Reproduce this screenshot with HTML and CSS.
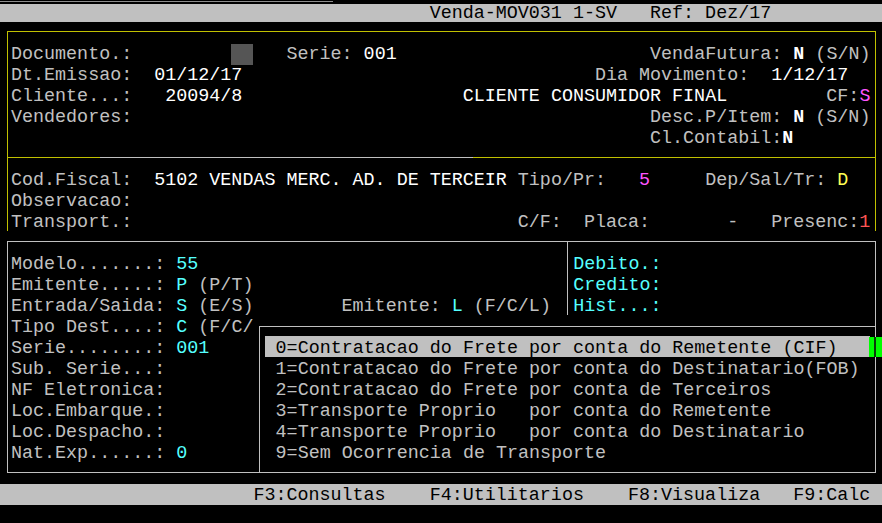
FILE: index.html
```html
<!DOCTYPE html>
<html lang="pt">
<head>
    <meta charset="UTF-8">
    <meta name="viewport" content="width=device-width, initial-scale=1.0">
    <title>Venda-MOV031</title>
    <link rel="stylesheet" href="styles.css">
</head>
<body>
    <div class="screen">
        <div class="titlebar">                                       Venda-MOV031 1-SV   Ref: Dez/17</div>

        <!-- cabecalho da venda -->
        <div class="frame frame-top">
            <div class="ln">Documento.:         <span class="cursor">  </span>   Serie: <span class="w">001</span>                       VendaFutura: <b class="w">N</b> (S/N)</div>
            <div class="ln">Dt.Emissao:  <span class="w">01/12/17</span>                                Dia Movimento:  <span class="w">1/12/17</span></div>
            <div class="ln">Cliente...:   <span class="w">20094/8</span>                    <span class="w">CLIENTE CONSUMIDOR FINAL</span>         CF:<span class="m">S</span></div>
            <div class="ln">Vendedores:                                               Desc.P/Item: <b class="w">N</b> (S/N)</div>
            <div class="ln">                                                          Cl.Contabil:<b class="w">N</b></div>
            <div class="rule"></div>
            <div class="ln">Cod.Fiscal:  <span class="w">5102 VENDAS MERC. AD. DE TERCEIR</span> Tipo/Pr:   <span class="m">5</span>     Dep/Sal/Tr: <span class="y">D</span></div>
            <div class="ln">Observacao:</div>
            <div class="ln">Transport.:                                   C/F:  Placa:       -   Presenc:<span class="r">1</span></div>
        </div>

        <!-- dados fiscais -->
        <div class="frame frame-low">
            <div class="split">
                <div class="fields">
                    <div class="ln">Modelo.......: <span class="c">55</span></div>
                    <div class="ln">Emitente.....: <span class="c">P</span> (P/T)</div>
                    <div class="ln">Entrada/Saida: <span class="c">S</span> (E/S)        Emitente: <span class="c">L</span> (F/C/L)</div>
                    <div class="ln">Tipo Dest....: <span class="c">C</span> (F/C/</div>
                    <div class="ln">Serie........: <span class="c">001</span></div>
                    <div class="ln">Sub. Serie...:</div>
                    <div class="ln">NF Eletronica:</div>
                    <div class="ln">Loc.Embarque.:</div>
                    <div class="ln">Loc.Despacho.:</div>
                    <div class="ln">Nat.Exp......: <span class="c">0</span></div>
                </div>
                <div class="side">
                    <div class="ln c">Debito.:</div>
                    <div class="ln c">Credito:</div>
                    <div class="ln c">Hist...:</div>
                </div>
            </div>
        </div>

        <div class="ln fkeys">                       F3:Consultas    F4:Utilitarios    F8:Visualiza   F9:Calc</div>

        <!-- lista de modalidade de frete -->
        <div class="popup">
            <div class="ln opt sel">0=Contratacao do Frete por conta do Remetente (CIF)</div>
            <div class="ln opt">1=Contratacao do Frete por conta do Destinatario(FOB)</div>
            <div class="ln opt">2=Contratacao do Frete por conta de Terceiros</div>
            <div class="ln opt">3=Transporte Proprio   por conta do Remetente</div>
            <div class="ln opt">4=Transporte Proprio   por conta do Destinatario</div>
            <div class="ln opt">9=Sem Ocorrencia de Transporte</div>
        </div>
        <div class="caret"></div>
    </div>
</body>
</html>
```

FILE: styles.css
```css
body {
    margin: 0;
    background: #000;
}
.screen {
    position: relative;
    width: 882px;
    height: 523px;
    overflow: hidden;
    background: #000;
    color: #c0c0c0;
    font-family: "Liberation Mono", "Courier New", monospace;
    font-size: 18.375px;
}
.ln {
    height: 21px;
    line-height: 21px;
    padding-top: 2px;
    box-sizing: border-box;
    white-space: pre;
}
.titlebar {
    height: 22px;
    line-height: 22px;
    padding-top: 3px;
    box-sizing: border-box;
    white-space: pre;
    color: #000;
    background:
        linear-gradient(#8c8c8c, #8c8c8c) 0 1px / 333px 1px no-repeat,
        linear-gradient(to bottom, #000 4px, #c0c0c0 4px);
}
.frame {
    margin-left: 7px;
    width: 869px;
    box-sizing: border-box;
    padding-left: 3.025px;
}
.frame-top {
    margin-top: 9px;
    border: 1px solid #c0c000;
    border-bottom: 0;
    padding-top: 10px;
}
.rule {
    height: 1px;
    margin: 10px 0 10px -3.025px;
    background: linear-gradient(to right, #c0c000 92px, #c0c0c0 92px, #c0c0c0 465px, #c0c000 465px);
}
.frame-low {
    margin-top: 10px;
    border: 1px solid #c0c0c0;
    padding-top: 10px;
    padding-bottom: 10px;
}
.split {
    display: flex;
    align-items: flex-start;
}
.fields {
    flex: none;
    width: 556px;
}
.side {
    margin-top: -10px;
    padding: 10px 0 0 5.3px;
    border-left: 1px solid #c0c0c0;
}
.fkeys {
    margin-top: 11px;
    padding-top: 1px;
    background: #c0c0c0;
    color: #000;
}
.popup {
    position: absolute;
    left: 259px;
    top: 326px;
    width: 617px;
    height: 147px;
    box-sizing: border-box;
    border: 1px solid #c0c0c0;
    background: #000;
    padding-top: 9px;
}
.opt {
    margin-left: 4.6px;
    width: 605.4px;
    padding-left: 11px;
}
.opt.sel {
    background: #c0c0c0;
    color: #000;
}
.caret {
    position: absolute;
    left: 869px;
    top: 337px;
    width: 13px;
    height: 20px;
    background: linear-gradient(to right, #00ff00 5px, #0a3a0a 5px, #0a3a0a 7px, #00ff00 7px);
}
.cursor {
    background: #555;
}
.w { color: #fff; }
.c { color: #55ffff; }
.m { color: #ff55ff; }
.y { color: #ffff55; }
.r { color: #ff5555; }
b { font-weight: bold; }
```
